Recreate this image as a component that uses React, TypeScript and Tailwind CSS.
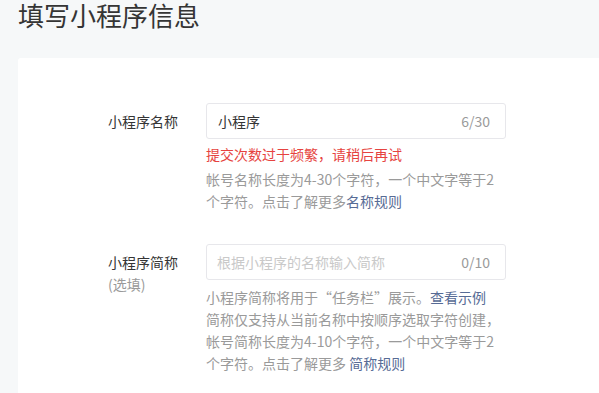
import React from "react";

const font = { fontFamily: '"Noto Sans CJK SC", "Noto Sans", sans-serif' };

export default function App() {
  return (
    <div className="min-h-[393px] w-full overflow-hidden bg-[#f6f8f9]" style={font}>
      <div className="pl-[18px] pt-0 text-[26px] leading-[30px] text-[#353535]">填写小程序信息</div>
      <div className="ml-[18px] mt-[28px] min-h-[335px] rounded-tl-[3px] bg-white pl-[90px] pt-[45px]">
        {/* Row 1 */}
        <div className="flex">
          <div className="w-[98px] pt-[7px] text-[14px] leading-[22px] text-[#353535]">小程序名称</div>
          <div className="w-[300px]">
            <div className="flex h-[36px] items-center justify-between rounded-[3px] border border-[#e7e7eb] pl-[11px] pr-[15px] text-[14px]">
              <span className="text-[#353535]">小程序</span>
              <span className="text-[#9a9a9a]">6/30</span>
            </div>
            <div className="mt-[4px] text-[14px] leading-[22px] text-[#e64340]">提交次数过于频繁，请稍后再试</div>
            <div className="mt-[3px] text-[14px] leading-[22px] text-[#9a9a9a]">
              <div className="whitespace-nowrap">帐号名称长度为4-30个字符，一个中文字等于2</div>
              <div className="whitespace-nowrap">
                个字符。点击了解更多<span className="text-[#576b95]">名称规则</span>
              </div>
            </div>
          </div>
        </div>
        {/* Row 2 */}
        <div className="mt-[32px] flex">
          <div className="w-[98px] pt-[7px] text-[14px] leading-[22px]">
            <div className="text-[#353535]">小程序简称</div>
            <div className="text-[#9a9a9a]">(选填)</div>
          </div>
          <div className="w-[300px]">
            <div className="flex h-[36px] items-center justify-between rounded-[3px] border border-[#e7e7eb] pl-[10px] pr-[15px] text-[14px]">
              <span className="text-[#c9c9c9]">根据小程序的名称输入简称</span>
              <span className="text-[#9a9a9a]">0/10</span>
            </div>
            <div className="mt-[6px] text-[14px] leading-[22px] text-[#9a9a9a]">
              <div className="whitespace-nowrap">
                小程序简称将用于“任务栏”展示。<span className="text-[#576b95]">查看示例</span>
              </div>
              <div className="whitespace-nowrap">简称仅支持从当前名称中按顺序选取字符创建，</div>
              <div className="whitespace-nowrap">帐号简称长度为4-10个字符，一个中文字等于2</div>
              <div className="whitespace-nowrap">
                个字符。点击了解更多 <span className="text-[#576b95]">简称规则</span>
              </div>
            </div>
          </div>
        </div>
      </div>
    </div>
  );
}
